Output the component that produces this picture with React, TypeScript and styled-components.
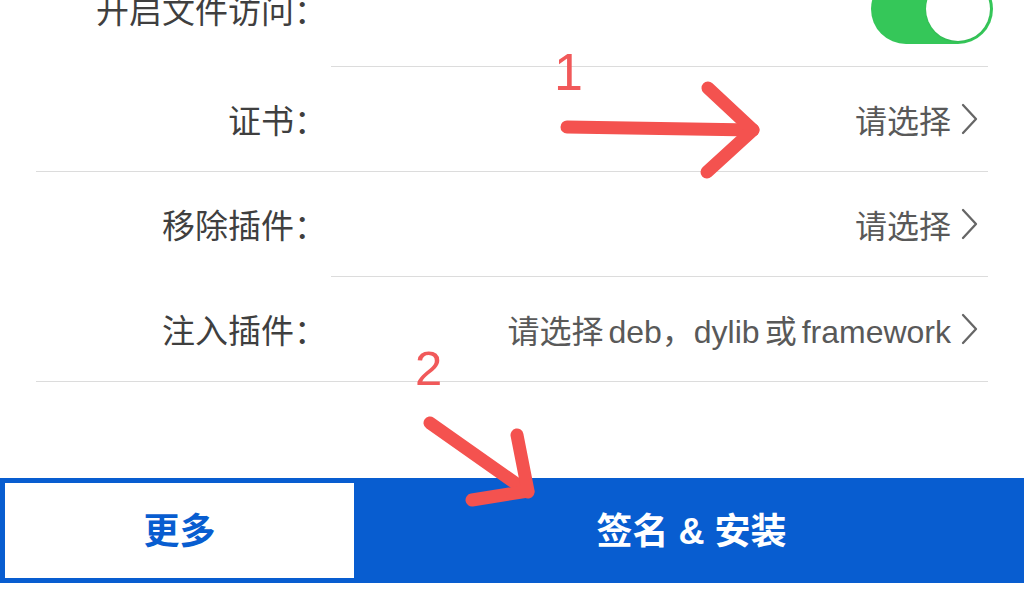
import React from "react";
import styled, { createGlobalStyle } from "styled-components";

const GlobalStyle = createGlobalStyle`
  html, body {
    margin: 0;
    padding: 0;
    background: #ffffff;
    overflow: hidden;
  }
  body {
    font-family: "Liberation Sans", "Noto Sans CJK SC", sans-serif;
  }
`;

const Page = styled.div`
  position: relative;
  width: 1024px;
  height: 612px;
  overflow: hidden;
  background: #ffffff;
`;

const List = styled.div`
  display: flex;
  flex-direction: column;
  margin: -38px 36px 0 36px;
`;

const Row = styled.div<{ $full?: boolean }>`
  display: flex;
  align-items: stretch;
  box-sizing: border-box;
  height: 105px;
  border-bottom: 1px solid ${p => (p.$full ? "#dcdcdc" : "transparent")};
`;

const Label = styled.div<{ $lift?: number }>`
  width: 295px;
  box-sizing: border-box;
  padding-right: 4px;
  padding-bottom: ${p => p.$lift ?? 0}px;
  display: flex;
  align-items: center;
  justify-content: flex-end;
  font-size: 33px;
  color: #3f3f3f;
  white-space: nowrap;
`;

const Value = styled.div<{ $line?: boolean; $lift?: number }>`
  flex: 1;
  display: flex;
  align-items: center;
  justify-content: flex-end;
  gap: 10px;
  padding-right: 10px;
  padding-bottom: ${p => p.$lift ?? 0}px;
  margin-bottom: ${p => (p.$line ? "-1px" : "0")};
  border-bottom: 1px solid ${p => (p.$line ? "#dcdcdc" : "transparent")};
  font-size: 32px;
  color: #595959;
  white-space: nowrap;
`;

// iOS puts a little room between CJK and Latin runs
const Latin = styled.span<{ $before: number; $after: number }>`
  margin-left: ${p => p.$before}px;
  margin-right: ${p => p.$after}px;
`;

const Toggle = styled.div`
  position: relative;
  width: 122px;
  height: 70px;
  margin-right: -15px;
  border-radius: 35px;
  background: #35c759;
`;

const Knob = styled.div`
  position: absolute;
  top: 3px;
  right: 3px;
  width: 64px;
  height: 64px;
  border-radius: 50%;
  background: #ffffff;
  box-shadow: 0 1px 2px rgba(0, 0, 0, 0.08);
`;

const Footer = styled.div`
  display: flex;
  height: 105px;
  margin-top: 96px;
  background: #085dd0;
`;

const MoreButton = styled.button`
  width: 349px;
  margin: 5px;
  border: none;
  background: #ffffff;
  color: #085dd0;
  font-family: "Liberation Sans", "Noto Sans CJK SC", sans-serif;
  font-size: 36px;
  font-weight: 700;
  padding: 0 0 6px 0;
`;

const SignButton = styled.button`
  flex: 1;
  border: none;
  background: transparent;
  color: #ffffff;
  font-family: "Liberation Sans", "Noto Sans CJK SC", sans-serif;
  font-size: 36px;
  font-weight: 700;
  padding: 0 0 6px 0;
`;

const Marks = styled.svg`
  position: absolute;
  left: 0;
  top: 0;
  pointer-events: none;
`;

const MarkNum = styled.text`
  font-family: "Liberation Sans", sans-serif;
  fill: #f1595a;
`;

const Chevron = () => (
  <svg width="17" height="32" viewBox="0 0 17 32">
    <polyline
      points="2,2 15,16 2,30"
      fill="none"
      stroke="#666666"
      strokeWidth="2.3"
      strokeLinecap="round"
      strokeLinejoin="round"
    />
  </svg>
);

const isHan = (c: string) => /[\u4e00-\u9fff]/.test(c);

function Spaced({ text }: { text: string }) {
  const parts = text.split(/([A-Za-z]+)/).filter(Boolean);
  return (
    <span>
      {parts.map((part, i) => {
        if (!/^[A-Za-z]+$/.test(part)) return part;
        const prev = parts[i - 1];
        const next = parts[i + 1];
        const before = prev && isHan(prev[prev.length - 1]) ? 5 : 0;
        const after = next && isHan(next[0]) ? 5 : 0;
        return (
          <Latin key={i} $before={before} $after={after}>
            {part}
          </Latin>
        );
      })}
    </span>
  );
}

const rows = [
  { label: "证书：", value: "请选择", full: true },
  { label: "移除插件：", value: "请选择", full: false },
  { label: "注入插件：", value: "请选择deb，dylib或framework", full: true },
];

export default function App() {
  return (
    <Page>
      <GlobalStyle />
      <List>
        <Row>
          <Label $lift={10}>开启文件访问：</Label>
          <Value $line $lift={10}>
            <Toggle>
              <Knob />
            </Toggle>
          </Value>
        </Row>
        {rows.map(r => (
          <Row key={r.label} $full={r.full}>
            <Label>{r.label}</Label>
            <Value $line={!r.full}>
              <Spaced text={r.value} />
              <Chevron />
            </Value>
          </Row>
        ))}
      </List>
      <Footer>
        <MoreButton>更多</MoreButton>
        <SignButton>签名 &amp; 安装</SignButton>
      </Footer>

      <Marks width="1024" height="612" viewBox="0 0 1024 612">
        <g fill="none" stroke="#f4524f" strokeWidth="13" strokeLinecap="round" strokeLinejoin="round">
          <path d="M567 127 L753 130" />
          <path d="M708 88 L753 130 L707 172" />
          <path d="M430 423 L528 492" />
          <path d="M517 435 L528 491 L472 500" />
        </g>
        <MarkNum x="554" y="90" fontSize="52">1</MarkNum>
        <MarkNum x="415" y="385" fontSize="49">2</MarkNum>
      </Marks>
    </Page>
  );
}
